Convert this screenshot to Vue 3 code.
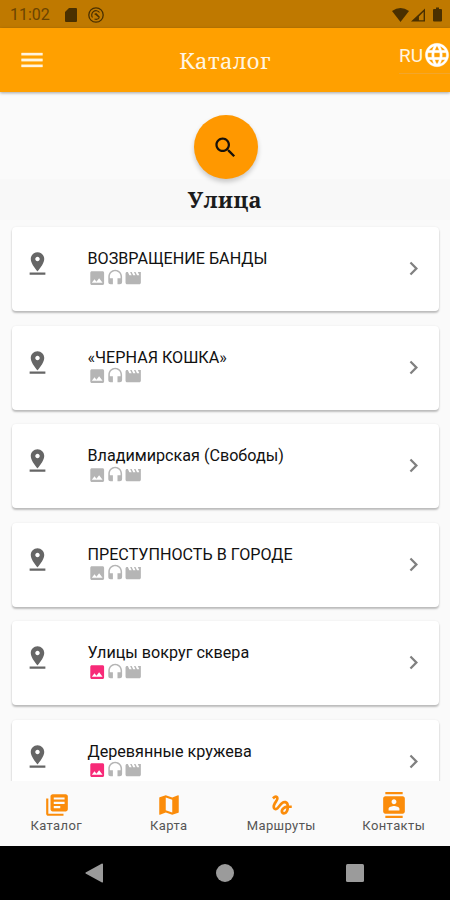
<script setup>
const icons = {
  menu: 'M3 18h18v-2H3v2zm0-5h18v-2H3v2zm0-7v2h18V6H3z',
  globe: 'M11.99 2C6.47 2 2 6.48 2 12s4.47 10 9.99 10C17.52 22 22 17.52 22 12S17.52 2 11.99 2zm6.93 6h-2.95c-.32-1.25-.78-2.45-1.38-3.56 1.84.63 3.37 1.91 4.33 3.56zM12 4.04c.83 1.2 1.48 2.53 1.91 3.96h-3.82c.43-1.43 1.08-2.76 1.91-3.96zM4.26 14C4.1 13.36 4 12.69 4 12s.1-1.36.26-2h3.38c-.08.66-.14 1.32-.14 2s.06 1.34.14 2H4.26zm.82 2h2.95c.32 1.25.78 2.45 1.38 3.56-1.84-.63-3.37-1.9-4.33-3.56zm2.95-8H5.08c.96-1.66 2.49-2.93 4.33-3.56C8.81 5.55 8.35 6.75 8.03 8zM12 19.96c-.83-1.2-1.48-2.53-1.91-3.96h3.82c-.43 1.43-1.08 2.76-1.91 3.96zM14.34 14H9.66c-.09-.66-.16-1.32-.16-2s.07-1.35.16-2h4.68c.09.65.16 1.32.16 2s-.07 1.34-.16 2zm.25 5.56c.6-1.11 1.06-2.31 1.38-3.56h2.95c-.96 1.65-2.49 2.93-4.33 3.56zM16.36 14c.08-.66.14-1.32.14-2s-.06-1.34-.14-2h3.38c.16.64.26 1.31.26 2s-.1 1.36-.26 2h-3.38z',
  search: 'M15.5 14h-.79l-.28-.27C15.41 12.59 16 11.11 16 9.5 16 5.91 13.09 3 9.5 3S3 5.91 3 9.5 5.91 16 9.5 16c1.61 0 3.09-.59 4.23-1.57l.27.28v.79l5 4.99L20.49 19l-4.99-5zm-6 0C7.01 14 5 11.99 5 9.5S7.01 5 9.5 5 14 7.01 14 9.5 11.99 14 9.5 14z',
  pin: 'M18 8c0-3.31-2.69-6-6-6S6 4.69 6 8c0 4.5 6 11 6 11s6-6.5 6-11zm-8 0c0-1.1.9-2 2-2s2 .9 2 2-.89 2-2 2c-1.1 0-2-.9-2-2zM5 20v2h14v-2H5z',
  image: 'M21 19V5c0-1.1-.9-2-2-2H5c-1.1 0-2 .9-2 2v14c0 1.1.9 2 2 2h14c1.1 0 2-.9 2-2zM8.5 13.5l2.5 3.01L14.5 12l4.5 6H5l3.5-4.5z',
  headset: 'M12 1c-4.97 0-9 4.03-9 9v7c0 1.66 1.34 3 3 3h3v-8H5v-2c0-3.87 3.13-7 7-7s7 3.13 7 7v2h-4v8h3c1.66 0 3-1.34 3-3v-7c0-4.97-4.03-9-9-9z',
  movie: 'M18 4l2 4h-3l-2-4h-2l2 4h-3l-2-4H8l2 4H7L5 4H4c-1.1 0-1.99.9-1.99 2L2 18c0 1.1.9 2 2 2h16c1.1 0 2-.9 2-2V4h-4z',
  chevron: 'M10 6L8.59 7.41 13.17 12l-4.58 4.59L10 18l6-6z',
}

const places = [
  { title: 'ВОЗВРАЩЕНИЕ БАНДЫ', photo: false },
  { title: '«ЧЕРНАЯ КОШКА»', photo: false },
  { title: 'Владимирская (Свободы)', photo: false },
  { title: 'ПРЕСТУПНОСТЬ В ГОРОДЕ', photo: false },
  { title: 'Улицы вокруг сквера', photo: true },
  { title: 'Деревянные кружева', photo: true },
]

const tabs = [
  { label: 'Каталог', path: 'M4 6H2v14c0 1.1.9 2 2 2h14v-2H4V6zm16-4H8c-1.1 0-2 .9-2 2v12c0 1.1.9 2 2 2h12c1.1 0 2-.9 2-2V4c0-1.1-.9-2-2-2zm-1 9H9V9h10v2zm-4 4H9v-2h6v2zm4-8H9V5h10v2z' },
  { label: 'Карта', path: 'M20.5 3l-.16.03L15 5.1 9 3 3.36 4.9c-.21.07-.36.25-.36.48V20.5c0 .28.22.5.5.5l.16-.03L9 18.9l6 2.1 5.64-1.9c.21-.07.36-.25.36-.48V3.5c0-.28-.22-.5-.5-.5zM15 19l-6-2.11V5l6 2.11V19z' },
  { label: 'Маршруты', path: 'M4.59 6.89c.7-.71 1.4-1.35 1.71-1.22.5.2 0 1.03-.3 1.52-.25.42-2.86 3.89-2.86 6.31 0 1.28.48 2.34 1.34 2.98.75.56 1.74.73 2.64.46 1.07-.31 1.95-1.4 3.06-2.77 1.21-1.49 2.83-3.44 4.08-3.44 1.63 0 1.65 1.01 1.76 1.79-3.78.64-5.38 3.67-5.38 5.37 0 1.7 1.44 3.09 3.21 3.09 1.63 0 4.29-1.33 4.69-6.1H21v-2.5h-2.47c-.15-1.65-1.09-4.2-4.03-4.2-2.25 0-4.18 1.91-4.94 2.84-.58.73-2.06 2.48-2.29 2.72-.25.3-.68.84-1.11.84-.45 0-.72-.83-.36-1.92.35-1.09 1.4-2.86 1.85-3.52.78-1.14 1.3-1.92 1.3-3.28C8.95 3.69 7.31 3 6.44 3 5.12 3 3.97 4 3.72 4.25c-.36.36-.66.66-.88.93l1.75 1.71zm9.29 11.66c-.31 0-.74-.26-.74-.72 0-.6.73-2.2 2.87-2.76-.3 2.69-1.43 3.48-2.13 3.48z' },
  { label: 'Контакты', path: 'M20 0H4v2h16V0zM4 24h16v-2H4v2zM20 4H4c-1.1 0-2 .9-2 2v12c0 1.1.9 2 2 2h16c1.1 0 2-.9 2-2V6c0-1.1-.9-2-2-2zm-8 2.75c1.24 0 2.25 1.01 2.25 2.25s-1.01 2.25-2.25 2.25S9.75 10.24 9.75 9 10.76 6.75 12 6.75zM17 17H7v-1.5c0-1.67 3.33-2.5 5-2.5s5 .83 5 2.5V17z' },
]
</script>

<template>
  <div class="screen">
    <div class="status">
      <span class="clock">11:02</span>
      <svg class="sd" viewBox="0 0 12 14"><path d="M4 0h7a1 1 0 0 1 1 1v12a1 1 0 0 1-1 1H1a1 1 0 0 1-1-1V4z" /></svg>
      <svg class="sync" viewBox="0 0 16 16">
        <circle cx="8" cy="8" r="7.2" fill="none" stroke="currentColor" stroke-width="1.3" />
        <path d="M4.500 10.500A4.300 4.300 0 0 1 11.500 5.500M11.500 10.500A4.300 4.300 0 0 1 6.500 12" fill="none" stroke="currentColor" stroke-width="1.200" />
        <path d="M6 7l2.200-1 3.800 4-1.200.8L8.200 8.500z" />
      </svg>
      <span class="grow"></span>
      <svg class="wifi" viewBox="0 0 17 14"><path d="M0 3Q8.500-3 17 3L8.500 14z" /></svg>
      <svg class="signal" viewBox="0 0 15 14"><path fill-rule="evenodd" d="M15 0v14H0zM13.500 3.500L8.500 8.500v4h5z" /></svg>
      <svg class="battery" viewBox="0 0 9 14"><path d="M3 0h3v1.500h2a1 1 0 0 1 1 1V13a1 1 0 0 1-1 1H1a1 1 0 0 1-1-1V2.500a1 1 0 0 1 1-1h2z" /></svg>
    </div>

    <header class="bar">
      <svg class="menu" viewBox="0 0 24 24"><path :d="icons.menu" /></svg>
      <h1>Каталог</h1>
      <div class="lang">
        <span>RU</span>
        <svg viewBox="0 0 24 24"><path :d="icons.globe" /></svg>
      </div>
    </header>

    <main class="content">
      <div class="top">
        <button class="fab"><svg viewBox="0 0 24 24"><path :d="icons.search" /></svg></button>
      </div>
      <h2>Улица</h2>
      <section class="list">
        <article v-for="place in places" :key="place.title" class="card">
          <svg class="pin" viewBox="0 0 24 24"><path :d="icons.pin" /></svg>
          <div class="info">
            <div class="title">{{ place.title }}</div>
            <div class="media">
              <svg :class="{ on: place.photo }" viewBox="0 0 24 24"><path :d="icons.image" /></svg>
              <svg viewBox="0 0 24 24"><path :d="icons.headset" /></svg>
              <svg viewBox="0 0 24 24"><path :d="icons.movie" /></svg>
            </div>
          </div>
          <svg class="chevron" viewBox="0 0 24 24"><path :d="icons.chevron" /></svg>
        </article>
      </section>
    </main>

    <nav class="tabs">
      <div v-for="tab in tabs" :key="tab.label" class="tab">
        <svg viewBox="0 0 24 24"><path :d="tab.path" /></svg>
        <span>{{ tab.label }}</span>
      </div>
    </nav>

    <div class="system">
      <svg viewBox="0 0 20 20"><path d="M18 1v18a1 1 0 0 1-1 .5L1.500 11a1 1 0 0 1 0-2L17 .5a1 1 0 0 1 1 .5z" /></svg>
      <svg viewBox="0 0 20 20"><circle cx="10" cy="10" r="9" /></svg>
      <svg viewBox="0 0 20 20"><rect x="1" y="1" width="18" height="18" rx="1.500" /></svg>
    </div>
  </div>
</template>

<style>
body {
  margin: 0;
  background: #fafafa;
}
</style>

<style scoped>
.screen {
  width: 450px;
  height: 900px;
  display: flex;
  flex-direction: column;
  overflow: hidden;
  background: #fafafa;
  font-family: Roboto, "Liberation Sans", sans-serif;
}
svg {
  display: block;
  flex: none;
  fill: currentColor;
}
.status {
  flex: none;
  height: 28px;
  box-sizing: border-box;
  padding: 1px 8px 0 10px;
  display: flex;
  align-items: center;
  background: #bf7900;
  color: #4a3000;
}
.clock {
  width: 55px;
  font-size: 16px;
  color: #6b4400;
}
.grow { flex: 1; }
.sd { width: 12px; height: 14px; margin-right: 11px; }
.sync { width: 16px; height: 16px; }
.wifi { width: 17px; height: 14px; margin-right: 2px; }
.signal { width: 14px; height: 14px; margin-right: 8px; }
.battery { width: 9px; height: 15px; }
.bar {
  flex: none;
  height: 64px;
  display: grid;
  grid-template-columns: 52px 1fr 52px;
  align-items: center;
  background: #ffa000;
  color: #fff5e0;
  box-shadow: 0 1px 3px rgba(0, 0, 0, .35);
  z-index: 1;
}
.menu { width: 28px; height: 28px; margin-left: 18.4px; stroke: currentColor; stroke-width: .3; }
h1 {
  margin: 0;
  text-align: center;
  font: 400 22px/30px "Noto Serif", "DejaVu Serif Condensed", "DejaVu Serif", serif;
  font-stretch: condensed;
  letter-spacing: .4px;
}
.lang {
  width: 51px;
  height: 36px;
  margin-top: -9px;
  margin-left: 1px;
  display: flex;
  align-items: center;
  font-size: 19px;
  border-bottom: 1px solid #f3a62b;
}
.lang svg {
  width: 28px;
  height: 28px;
  color: #fff;
  stroke: currentColor;
  stroke-width: .3;
}
.content {
  flex: 1;
  min-height: 0;
  overflow: hidden;
}
.top {
  height: 87px;
  box-sizing: border-box;
  padding: 23px 0 0 1px;
  display: flex;
  justify-content: center;
}
.fab {
  width: 64px;
  height: 64px;
  padding: 0;
  border: 0;
  border-radius: 50%;
  display: grid;
  place-items: center;
  background: #ff9800;
  color: #17110a;
  box-shadow: 0 3px 5px rgba(0, 0, 0, .2);
}
.fab svg { width: 27px; height: 27px; }
h2 {
  margin: 0;
  height: 41px;
  text-align: center;
  background: #f8f8f8;
  color: #1c1c1c;
  font: 700 22px/40px "Noto Serif", "DejaVu Serif Condensed", "DejaVu Serif", serif;
  font-stretch: condensed;
  letter-spacing: .5px;
}
.list {
  padding: 7px 11px 0 12px;
  display: flex;
  flex-direction: column;
  gap: 14.6px;
}
.card {
  flex: none;
  height: 84px;
  box-sizing: border-box;
  padding: 0 12px 0 11.5px;
  display: flex;
  align-items: flex-start;
  border-radius: 4px;
  background: #fff;
  box-shadow: 0 2px 2px rgba(0, 0, 0, .24), 0 0 2px rgba(0, 0, 0, .08);
}
.pin { width: 27px; height: 27px; margin-top: 23px; color: #666; }
.info { flex: 1; padding: 21px 0 0 37px; }
.title {
  height: 20.5px;
  font-size: 16.15px;
  line-height: 21px;
  color: #111;
  white-space: nowrap;
}
.media { display: flex; color: #b5b5b5; }
.media svg { width: 18.4px; height: 18.4px; }
.media .on { color: #f72a78; }
.chevron { width: 27px; height: 27px; margin-top: 28px; color: #808080; }
.tabs {
  flex: none;
  height: 65px;
  display: grid;
  grid-template-columns: repeat(4, 1fr);
  background: #fafafa;
}
.tab {
  padding-top: 11px;
  display: flex;
  flex-direction: column;
  align-items: center;
  color: #fb8c0a;
}
.tab svg { width: 26px; height: 26px; margin-left: 1px; }
.tab span {
  font-size: 13px;
  letter-spacing: .4px;
  line-height: 16px;
  color: #555;
}
.system {
  flex: none;
  height: 54px;
  padding: 0 85px;
  display: flex;
  align-items: center;
  justify-content: space-between;
  background: #000;
  color: #9b9b9b;
}
.system svg { width: 20px; height: 20px; }
</style>
